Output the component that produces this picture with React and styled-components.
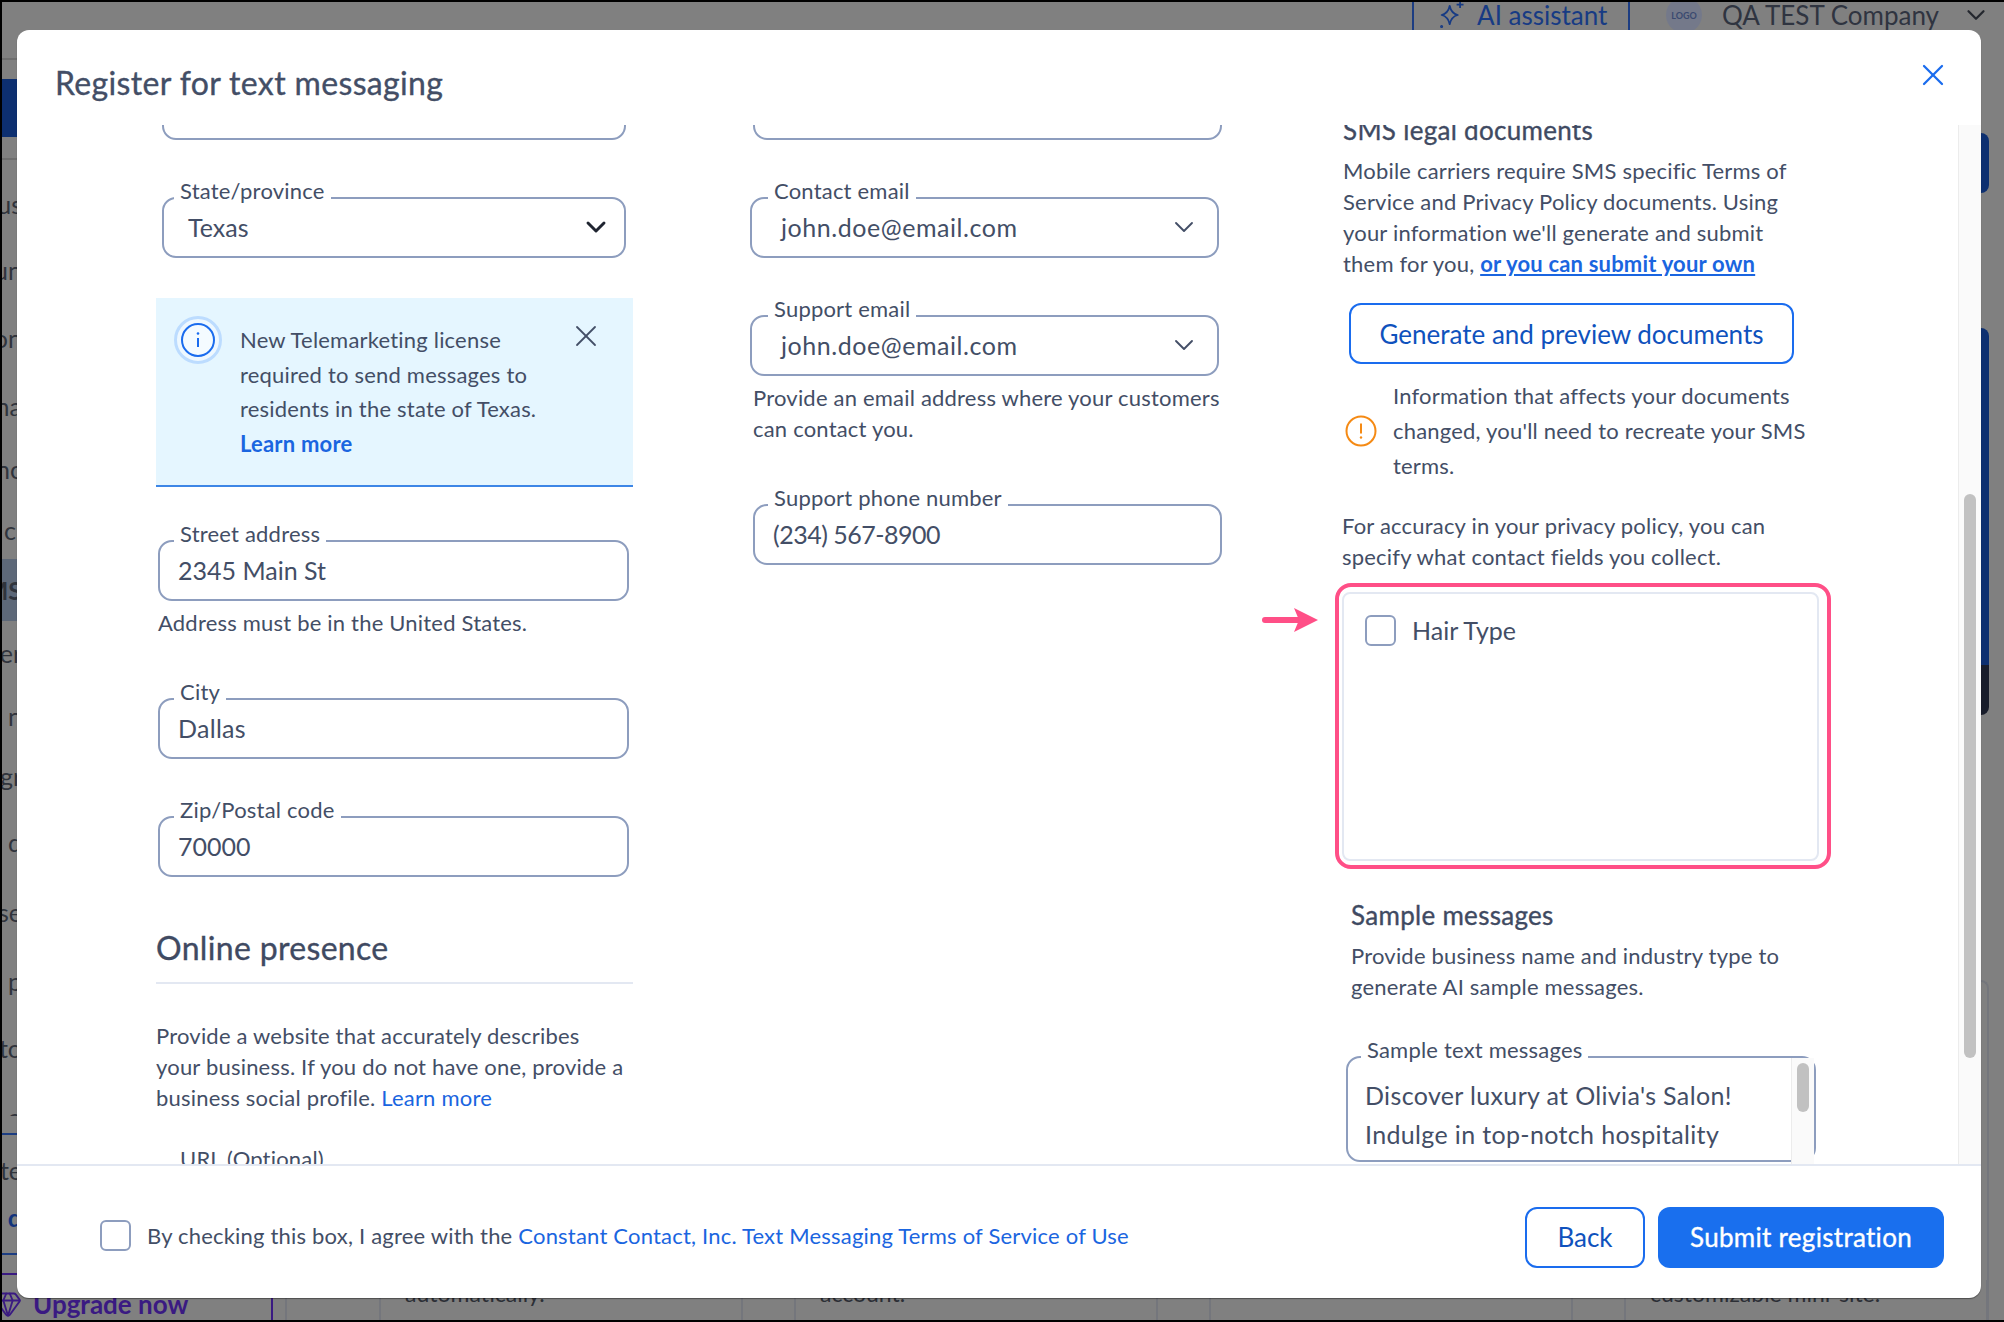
import React from 'react';
import styled, { createGlobalStyle, css } from 'styled-components';
import { ChevronDown, Gem, X } from 'lucide-react';

const GlobalStyle = createGlobalStyle`
  html, body {
    margin: 0;
    padding: 0;
    background: #000;
  }
  * {
    box-sizing: border-box;
  }
  body {
    font-family: Lato, "Open Sans", "Liberation Sans", sans-serif;
    color: #434e66;
  }
`;

const bodyText = css`
  font-size: 22px;
  letter-spacing: 0.2px;
  white-space: nowrap;
`;

const mediumText = css`
  font-weight: 400;
  -webkit-text-stroke: 0.35px currentColor;
`;

const Page = styled.div`
  position: relative;
  width: 2004px;
  height: 1322px;
  padding: 2px 0 2px 2px;
  overflow: hidden;
`;

const Backdrop = styled.div`
  width: 100%;
  height: 100%;
  background: #808080;
  display: flex;
  flex-direction: column;
  overflow: hidden;
`;

const TopBar = styled.div`
  height: 28px;
  flex: none;
  display: flex;
  align-items: center;
  justify-content: flex-end;
  padding: 0 13px 2px 0;
`;

const AssistantTab = styled.div`
  height: 30px;
  width: 218px;
  border-left: 2px solid #1c3d82;
  border-right: 2px solid #1c3d82;
  display: flex;
  align-items: center;
  gap: 10px;
  padding-left: 23px;
  margin-right: 36px;
  color: #173b84;
  font-size: 26px;
`;

const LogoDot = styled.div`
  width: 36px;
  height: 36px;
  flex: none;
  border-radius: 50%;
  background: #74798a;
  color: #3a4a70;
  font-size: 9px;
  font-weight: 700;
  display: flex;
  align-items: center;
  justify-content: center;
  margin-right: 20px;
`;

const CompanyName = styled.div`
  color: #2f3440;
  font-size: 26px;
  white-space: nowrap;
  margin-right: 22px;
`;

const BackdropMain = styled.div`
  flex: 1;
  display: flex;
  min-height: 0;
`;

const SideNav = styled.div`
  width: 15px;
  flex: none;
  display: flex;
  flex-direction: column;
  overflow: hidden;
`;

const NavBrand = styled.div`
  height: 58px;
  flex: none;
  margin-top: 19px;
  background: #0d2f70;
`;

const NavRule = styled.div`
  height: 2px;
  flex: none;
  margin-top: ${p => p.$gap}px;
  background: ${p => p.$tone};
`;

const NavItem = styled.div`
  height: ${p => p.$height || 32}px;
  flex: none;
  margin: ${p => p.$gap}px -5px 0 0;
  display: flex;
  justify-content: flex-end;
  overflow: hidden;
  font-size: 25px;
  line-height: ${p => (p.$active ? 62 : 32)}px;
  white-space: nowrap;
  color: ${p => (p.$link ? '#12337c' : '#30343c')};
  font-weight: ${p => (p.$strong ? 700 : 400)};
  background: ${p => (p.$active ? '#5d6878' : 'transparent')};
`;

const RightRail = styled.div`
  margin-left: auto;
  width: 23px;
  flex: none;
  display: flex;
  flex-direction: column;
`;

const RailBlock = styled.div`
  width: 8px;
  flex: none;
  height: ${p => p.$height}px;
  margin-top: ${p => p.$top}px;
  background: ${p => p.$tone};
  border-radius: ${p => p.$radius};
`;

const RailCardEdge = styled.div`
  width: 8px;
  flex: 1;
  margin-top: 265px;
  border-top: 2px solid #74767c;
  border-right: 2px solid #74767c;
  border-top-right-radius: 12px;
`;

const BottomStrip = styled.div`
  position: absolute;
  left: 2px;
  right: 0;
  bottom: 2px;
  height: 40px;
  display: flex;
  align-items: stretch;
  overflow: hidden;
`;

const Upgrade = styled.div`
  width: 271px;
  flex: none;
  display: flex;
  align-items: center;
  gap: 11px;
  padding-top: 8px;
  color: #3a1a82;
  font-size: 26px;
  font-weight: 700;
  border-right: 2px solid #3a1a82;
  white-space: nowrap;
`;

const UpgradeGem = styled(Gem)`
  flex: none;
  margin-left: -8px;
`;

const PanelEdge = styled.div`
  width: 94px;
  flex: none;
  margin-left: 12px;
  border-left: 2px solid #74767c;
`;

const CardRow = styled.div`
  display: flex;
  gap: 51px;
`;

const PageCard = styled.div`
  width: 364px;
  flex: none;
  padding-left: 24px;
  border-left: 2px solid #74767c;
  border-right: 2px solid #74767c;
  font-size: 23px;
  line-height: 26px;
  color: #2c2f36;
  white-space: nowrap;
`;

const Modal = styled.div`
  position: absolute;
  left: 17px;
  top: 30px;
  width: 1964px;
  height: 1268px;
  background: #fff;
  border-radius: 12px;
  box-shadow: 0 1px 1px rgba(0, 0, 0, 0.4);
  display: flex;
  flex-direction: column;
  overflow: hidden;
`;

const ModalHeader = styled.header`
  height: 95px;
  flex: none;
  display: flex;
  align-items: flex-start;
  justify-content: space-between;
  padding: 33px 38px 0;
`;

const Title = styled.h1`
  margin: 0;
  font-size: 32px;
  line-height: 40px;
  letter-spacing: 0.35px;
  color: #434e66;
  ${mediumText}
`;

const CloseButton = styled.button`
  border: 0;
  background: none;
  padding: 0;
  color: #1a6cee;
  display: flex;
  margin: -6px -8px 0 0;
`;

const ModalBody = styled.div`
  flex: 1;
  min-height: 0;
  display: flex;
  padding-left: 139px;
  overflow: hidden;
`;

const Column = styled.div`
  width: ${p => p.$width}px;
  margin-left: ${p => p.$left || 0}px;
  flex: none;
  display: flex;
  flex-direction: column;
`;

const Field = styled.div`
  position: relative;
  flex: none;
  height: 61px;
  margin: ${p => p.$top || 0}px ${p => p.$right || 0}px 0 ${p => p.$left || 0}px;
  border: 2px solid #8d9dbe;
  border-radius: 14px;
  display: flex;
  align-items: center;
  justify-content: space-between;
  padding: 0 ${p => p.$padRight || 18}px 2px ${p => p.$padLeft || 18}px;
`;

const FieldLabel = styled.label`
  position: absolute;
  left: ${p => p.$left || 10}px;
  top: -21px;
  padding: 0 6px;
  background: linear-gradient(transparent 60%, #fff 60%);
  font-size: 22px;
  letter-spacing: 0.2px;
  line-height: 26px;
  height: 26px;
  white-space: nowrap;
  color: #434e66;
`;

const FieldValue = styled.span`
  font-size: 25px;
  letter-spacing: ${p => p.$track || 0}px;
  line-height: 32px;
  white-space: nowrap;
  color: #434e66;
`;

const Hint = styled.p`
  margin: ${p => p.$top || 0}px 0 0 ${p => p.$left || 0}px;
  line-height: 31px;
  color: #434e66;
  ${bodyText}
`;

const InlineLink = styled.a`
  color: #1a65e0;
  font-weight: ${p => (p.$strong ? 700 : 400)};
  text-decoration: ${p => (p.$underline ? 'underline' : 'none')};
`;

const Alert = styled.div`
  height: 189px;
  flex: none;
  margin-top: 40px;
  display: flex;
  padding: 18px 29px 0 18px;
  background: #e5f6ff;
  border-bottom: 2px solid #3d86e6;
`;

const AlertText = styled.div`
  flex: 1;
  margin: 7px 0 0 18px;
  line-height: 34.7px;
  ${bodyText}
`;

const AlertClose = styled.button`
  border: 0;
  background: none;
  padding: 0;
  height: 36px;
  margin-top: 2px;
  color: #434e66;
`;

const SectionHeading = styled.h2`
  margin: ${p => p.$top}px 0 0;
  padding-bottom: 14px;
  border-bottom: 2px solid #e3e8f2;
  font-size: 32px;
  letter-spacing: 0.33px;
  line-height: 40px;
  color: #3f4a62;
  ${mediumText}
`;

const SubHeading = styled.h3`
  margin: ${p => p.$top}px 0 0 ${p => p.$left}px;
  font-size: 26px;
  letter-spacing: 0.3px;
  line-height: 30px;
  color: #3f4a62;
  white-space: nowrap;
  ${mediumText}
`;

const OutlineButton = styled.button`
  height: 61px;
  width: ${p => p.$width}px;
  flex: none;
  margin: ${p => p.$top || 0}px 0 0 ${p => p.$left || 0}px;
  border: 2px solid #1a6cee;
  border-radius: 12px;
  background: #fff;
  color: #0f52bd;
  font-family: inherit;
  font-size: 26px;
`;

const SolidButton = styled.button`
  height: 61px;
  width: ${p => p.$width}px;
  flex: none;
  border: 0;
  border-radius: 12px;
  background: #196fee;
  color: #fff;
  font-family: inherit;
  font-size: 26px;
  letter-spacing: 0.3px;
  ${mediumText}
`;

const Notice = styled.div`
  margin: 14px 0 0 10px;
  display: flex;
  align-items: center;
  gap: 16px;
  line-height: 35px;
  ${bodyText}
`;

const Highlight = styled.div`
  position: relative;
  flex: none;
  height: 286px;
  margin-top: 11px;
  border: 4px solid #ff4f87;
  border-radius: 16px;
  padding: 5px 8px 4px 3px;
`;

const PointerArrow = styled.svg`
  position: absolute;
  left: -77px;
  top: 21px;
`;

const FieldList = styled.div`
  height: 100%;
  border: 2px solid #e3e8f2;
  border-radius: 8px;
  padding: 20px 21px;
`;

const CheckRow = styled.label`
  display: flex;
  align-items: center;
  gap: 16px;
  font-size: 25px;
  line-height: 32px;
  color: #434e66;
`;

const CheckBox = styled.span`
  width: 31px;
  height: 31px;
  flex: none;
  border: 2px solid #8d9dbe;
  border-radius: 6px;
  background: #fff;
`;

const TextArea = styled.div`
  position: relative;
  flex: none;
  height: 106px;
  margin: ${p => p.$top}px 15px 0 11px;
  border: 2px solid #8d9dbe;
  border-radius: 14px;
  display: flex;
  justify-content: space-between;
  padding: 18px 0 0 17px;
`;

const TextAreaValue = styled.div`
  font-size: 25px;
  letter-spacing: 0.35px;
  line-height: 39px;
  white-space: nowrap;
  color: #434e66;
`;

const Scrollbar = styled.div`
  flex: none;
  width: ${p => p.$width}px;
  height: ${p => (p.$inner ? '106px' : 'auto')};
  margin: ${p => (p.$inner ? '-18px 0 0 0' : '0 0 0 auto')};
  padding: 0 ${p => p.$gap}px;
  background: #fafafa;
  border-left: 1px solid #ececec;
`;

const ScrollThumb = styled.div`
  height: ${p => p.$height}px;
  margin-top: ${p => p.$top}px;
  background: #c1c1c1;
  border-radius: 7px;
`;

const ModalFooter = styled.footer`
  height: 134px;
  flex: none;
  display: flex;
  align-items: center;
  border-top: 2px solid #e3e8f2;
  padding: 10px 37px 0 83px;
`;

const Agreement = styled.label`
  display: flex;
  align-items: center;
  gap: 16px;
  margin-top: -4px;
  ${bodyText}
`;

const FooterActions = styled.div`
  margin-left: auto;
  display: flex;
  gap: 13px;
`;

const Chevron = styled(ChevronDown)`
  flex: none;
  color: ${p => p.$tone || '#434e66'};
`;

// cut off by the modal, only the last letters of each sidebar entry show
const sideItems = [
  { text: 'us', gap: 28 },
  { text: 'un', gap: 34 },
  { text: 'on', gap: 36 },
  { text: 'na', gap: 36 },
  { text: 'nc', gap: 31 },
  { text: 'ci', gap: 29 },
  { text: 'MS', gap: 13, active: true, strong: true, height: 62 },
  { text: 'er', gap: 16 },
  { text: 'n', gap: 31 },
  { text: 'gr', gap: 28 },
  { text: 'd', gap: 34 },
  { text: 'se', gap: 38 },
  { text: 'p', gap: 37 },
  { text: 'to', gap: 35 },
  { text: 'o', gap: 37, height: 15 }
];

const pageCards = ['automatically.', 'account.', '', 'customizable mini-site.'];

function SparkleIcon() {
  return (
    <svg width="30" height="30" viewBox="0 0 26 26" fill="none" stroke="#173b84" strokeWidth="1.5" strokeLinejoin="round">
      <path d="M11 5c1 5 3 7 7 8-4 1-6 3-7 8-1-5-3-7-7-8 4-1 6-3 7-8z" />
      <path d="M20 1v6M17 4h6" />
      <circle cx="4" cy="23" r="0.6" />
    </svg>
  );
}

function InfoIcon() {
  return (
    <svg width="48" height="48" viewBox="0 0 48 48" fill="none" style={{ flex: 'none' }}>
      <circle cx="24" cy="24" r="22.5" stroke="#bcdcff" strokeWidth="3" fill="#eef8ff" />
      <circle cx="24" cy="24" r="16" stroke="#1a6cee" strokeWidth="2" fill="#f4fbff" />
      <circle cx="24" cy="17.5" r="1.3" fill="#1a6cee" />
      <path d="M24 22v9" stroke="#1a6cee" strokeWidth="2" />
    </svg>
  );
}

function WarningIcon() {
  return (
    <svg width="32" height="32" viewBox="0 0 32 32" fill="none" style={{ flex: 'none' }}>
      <circle cx="16" cy="16" r="14.5" stroke="#f58a14" strokeWidth="2" />
      <path d="M16 8.5v10" stroke="#f58a14" strokeWidth="2" />
      <circle cx="16" cy="22.5" r="1.2" fill="#f58a14" />
    </svg>
  );
}

function SelectField({ label, labelLeft, value, track, top, left, right, padLeft, padRight, iconWeight, iconTone }) {
  return (
    <Field $top={top} $left={left} $right={right} $padLeft={padLeft} $padRight={padRight}>
      <FieldLabel $left={labelLeft}>{label}</FieldLabel>
      <FieldValue $track={track}>{value}</FieldValue>
      <Chevron size={32} strokeWidth={iconWeight} $tone={iconTone} />
    </Field>
  );
}

function TextField({ label, labelLeft, value, track, top, left, right }) {
  return (
    <Field $top={top} $left={left} $right={right}>
      {label ? <FieldLabel $left={labelLeft}>{label}</FieldLabel> : null}
      <FieldValue $track={track}>{value}</FieldValue>
    </Field>
  );
}

export default function App() {
  return (
    <>
      <GlobalStyle />
      <Page>
        <Backdrop>
          <TopBar>
            <AssistantTab>
              <SparkleIcon />
              AI assistant
            </AssistantTab>
            <LogoDot>LOGO</LogoDot>
            <CompanyName>QA TEST Company</CompanyName>
            <Chevron size={30} strokeWidth={1.8} $tone="#24272e" />
          </TopBar>
          <BackdropMain>
            <SideNav>
              <NavRule $gap={28} $tone="#6e6e6e" />
              <NavBrand />
              <NavRule $gap={21} $tone="#6e6e6e" />
              {sideItems.map(item => (
                <NavItem key={item.text} $gap={item.gap} $height={item.height} $active={item.active} $strong={item.strong}>
                  {item.text}
                </NavItem>
              ))}
              <NavRule $gap={17} $tone="#1c3d82" />
              <NavItem $gap={19}>te</NavItem>
              <NavItem $gap={15} $link $strong>d</NavItem>
              <NavRule $gap={20} $tone="#1c3d82" />
              <NavRule $gap={18} $tone="#3a1a82" />
            </SideNav>
            <RightRail>
              <RailBlock $top={103} $height={60} $tone="#0d2f70" $radius="0 10px 10px 0" />
              <RailBlock $top={135} $height={337} $tone="#0d2f70" $radius="0 10px 0 0" />
              <RailBlock $top={0} $height={50} $tone="#181c2a" $radius="0 0 10px 0" />
              <RailCardEdge />
            </RightRail>
          </BackdropMain>
        </Backdrop>
        <BottomStrip>
          <Upgrade>
            <UpgradeGem size={28} color="#3a1a82" strokeWidth={1.6} />
            Upgrade now
          </Upgrade>
          <PanelEdge />
          <CardRow>
            {pageCards.map((text, i) => (
              <PageCard key={i}>{text}</PageCard>
            ))}
          </CardRow>
        </BottomStrip>

        <Modal>
          <ModalHeader>
            <Title>Register for text messaging</Title>
            <CloseButton aria-label="Close">
              <X size={36} strokeWidth={1.5} />
            </CloseButton>
          </ModalHeader>

          <ModalBody>
            <Column $width={477}>
              <TextField top={-46} left={6} right={7} />
              <SelectField label="State/province" value="Texas" top={57} left={6} right={7} padLeft={24} padRight={12} iconWeight={2.2} iconTone="#1f2430" />
              <Alert>
                <InfoIcon />
                <AlertText>
                  New Telemarketing license<br />
                  required to send messages to<br />
                  residents in the state of Texas.<br />
                  <InlineLink $strong>Learn more</InlineLink>
                </AlertText>
                <AlertClose aria-label="Dismiss">
                  <X size={36} strokeWidth={1.2} />
                </AlertClose>
              </Alert>
              <TextField label="Street address" labelLeft={14} value="2345 Main St" top={53} left={2} right={4} />
              <Hint $top={6} $left={2}>Address must be in the United States.</Hint>
              <TextField label="City" labelLeft={14} value="Dallas" track={0.3} top={60} left={2} right={4} />
              <TextField label="Zip/Postal code" labelLeft={14} value="70000" top={57} left={2} right={4} />
              <SectionHeading $top={51}>Online presence</SectionHeading>
              <Hint $top={36}>
                Provide a website that accurately describes<br />
                your business. If you do not have one, provide a<br />
                business social profile. <InlineLink>Learn more</InlineLink>
              </Hint>
              <TextField label="URL (Optional)" labelLeft={14} top={52} left={2} right={4} />
            </Column>

            <Column $width={472} $left={117}>
              <TextField top={-46} left={3} />
              <SelectField label="Contact email" labelLeft={16} value="john.doe@email.com" track={0.55} top={57} right={3} padLeft={29} padRight={17} iconWeight={1.4} />
              <SelectField label="Support email" labelLeft={16} value="john.doe@email.com" track={0.55} top={57} right={3} padLeft={29} padRight={17} iconWeight={1.4} />
              <Hint $top={6} $left={3}>
                Provide an email address where your customers<br />
                can contact you.
              </Hint>
              <TextField label="Support phone number" labelLeft={13} value="(234) 567-8900" track={-0.5} top={60} left={3} />
            </Column>

            <Column $width={496} $left={113}>
              <SubHeading $top={-10} $left={8}>SMS legal documents</SubHeading>
              <Hint $top={10} $left={8}>
                Mobile carriers require SMS specific Terms of<br />
                Service and Privacy Policy documents. Using<br />
                your information we'll generate and submit<br />
                them for you, <InlineLink $strong $underline>or you can submit your own</InlineLink>
              </Hint>
              <OutlineButton $top={24} $left={14} $width={445}>Generate and preview documents</OutlineButton>
              <Notice>
                <WarningIcon />
                <span>
                  Information that affects your documents<br />
                  changed, you'll need to recreate your SMS<br />
                  terms.
                </span>
              </Notice>
              <Hint $top={27} $left={7}>
                For accuracy in your privacy policy, you can<br />
                specify what contact fields you collect.
              </Hint>
              <Highlight>
                <PointerArrow width="56" height="24" viewBox="0 0 56 24">
                  <path d="M3 12h40" stroke="#ff4f87" strokeWidth="6" strokeLinecap="round" />
                  <path d="M32 0l24 12-24 12 5-12z" fill="#ff4f87" />
                </PointerArrow>
                <FieldList>
                  <CheckRow>
                    <CheckBox />
                    Hair Type
                  </CheckRow>
                </FieldList>
              </Highlight>
              <SubHeading $top={31} $left={16}>Sample messages</SubHeading>
              <Hint $top={10} $left={16}>
                Provide business name and industry type to<br />
                generate AI sample messages.
              </Hint>
              <TextArea $top={54}>
                <FieldLabel $left={13}>Sample text messages</FieldLabel>
                <TextAreaValue>
                  Discover luxury at Olivia's Salon!<br />
                  Indulge in top-notch hospitality
                </TextAreaValue>
                <Scrollbar $inner $width={23} $gap={5}>
                  <ScrollThumb $top={5} $height={49} />
                </Scrollbar>
              </TextArea>
            </Column>

            <Scrollbar $width={23} $gap={5}>
              <ScrollThumb $top={369} $height={564} />
            </Scrollbar>
          </ModalBody>

          <ModalFooter>
            <Agreement>
              <CheckBox />
              <span>
                By checking this box, I agree with the <InlineLink>Constant Contact, Inc. Text Messaging Terms of Service of Use</InlineLink>
              </span>
            </Agreement>
            <FooterActions>
              <OutlineButton $width={120}>Back</OutlineButton>
              <SolidButton $width={286}>Submit registration</SolidButton>
            </FooterActions>
          </ModalFooter>
        </Modal>
      </Page>
    </>
  );
}
